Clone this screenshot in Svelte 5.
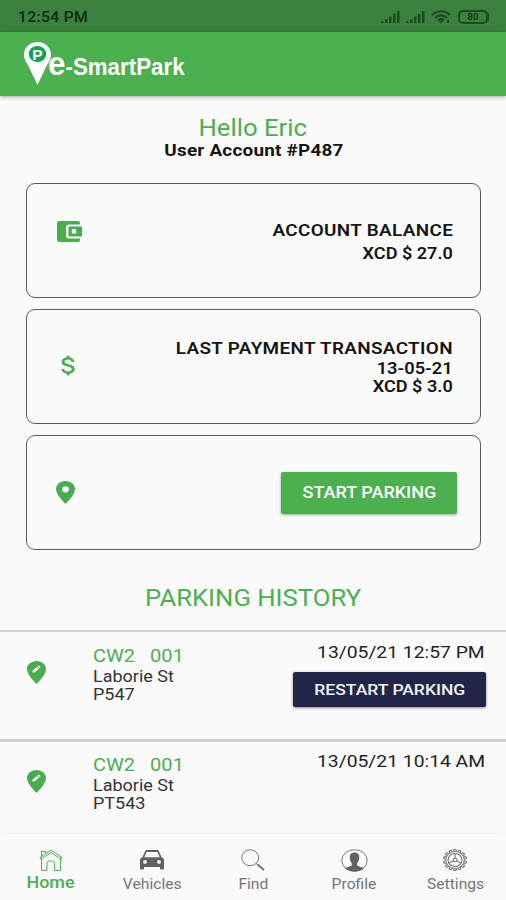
<script lang="ts">
  /**
   * e-SmartPark home screen: balance, last payment, start action,
   * and the most recent parking sessions above the tab bar.
   */
  interface Session {
    plate: string;
    street: string;
    spot: string;
    time: string;
    restart: boolean;
  }

  const sessions: Session[] = [
    { plate: "CW2", street: "Laborie St", spot: "P547", time: "13/05/21 12:57 PM", restart: true },
    { plate: "CW2", street: "Laborie St", spot: "PT543", time: "13/05/21 10:14 AM", restart: false },
  ];

  const tabs = ["Home", "Vehicles", "Find", "Profile", "Settings"];
  let active = $state("Home");

  const teeth = Array.from({ length: 14 }, (_, i) => (i * 360) / 14);
</script>

{#snippet signal()}
  <svg class="signal" viewBox="0 0 19 13" preserveAspectRatio="none">
    <path d="M0 11h2.500v2H0zM4 9h2.500v4H4zM8 6h2.500v7H8zM12 3h2.500v10H12zM16 0h2.500v13H16z" />
  </svg>
{/snippet}

<div class="screen">
  <div class="status">
    <span class="clock">12:54 PM</span>
    <div class="indicators">
      {@render signal()}
      {@render signal()}
      <svg class="wifi" viewBox="0 0 20 14">
        <path d="M1 5c5-5 13-5 18 0M4 8c3.500-3.500 8.500-3.500 12 0M7 10.500c2-2 4-2 6 0" />
        <path class="solid" d="M10 13.500l-2.500-3h5zM16 10h2v3h-2z" />
      </svg>
      <div class="battery"><span>80</span></div>
    </div>
  </div>

  <header class="appbar">
    <svg class="logo-pin" viewBox="0 0 27 43">
      <path d="M13.500 0C6 0 0 5.500 0 12.500c0 5 2.500 8 5 12.500l8.500 18L22 25c2.500-4.500 5-7.500 5-12.500C27 5.500 21 0 13.500 0z" fill="#fff" />
      <ellipse cx="13.500" cy="12" rx="8.700" ry="8" fill="#12a150" />
      <text x="13.500" y="17.500" text-anchor="middle">P</text>
    </svg>
    <span class="logo-text"><span class="logo-e">e</span>-SmartPark</span>
  </header>

  <main>
    <div class="greeting">
      <h1><span>Hello Eric</span></h1>
      <p><span>User Account #P487</span></p>
    </div>

    <section class="cards">
      <div class="card">
        <svg class="wallet" viewBox="0 0 25 21" preserveAspectRatio="none">
          <path d="M2.500 0H21a2 2 0 0 1 2 2v1.500H12A3 3 0 0 0 9 6.500v8a3 3 0 0 0 3 3h11V19a2 2 0 0 1-2 2H2.500A2.500 2.500 0 0 1 0 18.500v-16A2.500 2.500 0 0 1 2.500 0z" />
          <path fill-rule="evenodd" d="M12.500 5.500H25v10H12.500a1 1 0 0 1-1-1v-8a1 1 0 0 1 1-1zM14.800 8.300v4.200h4.400V8.300z" />
        </svg>
        <div class="details balance">
          <strong>ACCOUNT BALANCE</strong>
          <b>XCD $ 27.0</b>
        </div>
      </div>

      <div class="card">
        <svg class="dollar" viewBox="6.100 3 10.600 18" preserveAspectRatio="none">
          <path d="M11.800 10.900c-2.270-.590-3-1.200-3-2.150 0-1.090 1.010-1.850 2.700-1.850 1.780 0 2.440.850 2.500 2.100h2.210c-.070-1.720-1.120-3.300-3.210-3.810L11.500 3 10 5.160c-1.940.420-3.500 1.680-3.500 3.610 0 2.310 1.910 3.460 4.700 4.130 2.500.600 3 1.480 3 2.410 0 .690-.490 1.790-2.700 1.790-2.060 0-2.870-.920-2.980-2.100h-2.200c.120 2.190 1.760 3.420 3.680 3.830L11.500 21l1.500-2.150c1.950-.370 3.500-1.500 3.500-3.550 0-2.840-2.430-3.810-4.700-4.400z" />
        </svg>
        <div class="details payment">
          <strong>LAST PAYMENT TRANSACTION</strong>
          <b class="date">13-05-21</b>
          <b>XCD $ 3.0</b>
        </div>
      </div>

      <div class="card">
        <svg class="pin" viewBox="5 2 14 20" preserveAspectRatio="none">
          <path fill-rule="evenodd" d="M12 2C8.130 2 5 5.130 5 9c0 5.250 7 13 7 13s7-7.750 7-13c0-3.870-3.130-7-7-7zM12 6.500a2.500 2.700 0 1 0 0 5.400a2.500 2.700 0 1 0 0-5.400z" />
        </svg>
        <button class="start" type="button"><span>START PARKING</span></button>
      </div>
    </section>

    <h2><span>PARKING HISTORY</span></h2>

    {#each sessions as s (s.time)}
      <article class="session">
        <svg class="pin" viewBox="5 2 14 20" preserveAspectRatio="none">
          <path d="M12 2C8.140 2 5 5.140 5 9c0 5.250 7 13 7 13s7-7.750 7-13c0-3.860-3.140-7-7-7zm-1.560 10H9v-1.440l3.350-3.340 1.430 1.430L10.440 12zm4.450-4.450l-.700.700-1.440-1.440.700-.700c.150-.150.390-.150.540 0l.900.900c.150.150.150.390 0 .540z" />
        </svg>
        <div class="place">
          <span class="plate">{s.plate}&nbsp;&nbsp; 001</span>
          <span>{s.street}</span>
          <span>{s.spot}</span>
        </div>
        <div class="when">
          <time>{s.time}</time>
          {#if s.restart}
            <button class="restart" type="button"><span>RESTART PARKING</span></button>
          {/if}
        </div>
      </article>
    {/each}
  </main>

  <nav>
    {#each tabs as tab (tab)}
      <button class="tab" class:active={tab === active} type="button" onclick={() => (active = tab)}>
        {#if tab === "Home"}
          <svg width="24" height="22" viewBox="0 0 24 22" class="line">
            <path d="M2.500 9v12.500h5.500V14c0-1.500 1-2 3.700-2s3.700.500 3.700 2v7.500H21.500V9" />
            <path d="M1 8.500L12 1l11 7.500-1 1.500L12 3.500 2 10zM2.500 7V2.500h4v2" />
          </svg>
        {:else if tab === "Vehicles"}
          <svg width="24" height="20" viewBox="0 0 24 20">
            <path fill-rule="evenodd" d="M5 1.500C5.400.500 6 0 7 0h10c1 0 1.600.500 2 1.500L21.500 7 24 9v9.500a1 1 0 0 1-1 1h-2a1 1 0 0 1-1-1V17H4v1.500a1 1 0 0 1-1 1H1a1 1 0 0 1-1-1V9l2.500-2zM6.500 2L4.300 7.300h15.400L17.500 2zM5 10a1.900 1.900 0 1 0 0 3.800A1.900 1.900 0 0 0 5 10zm14 0a1.900 1.900 0 1 0 0 3.800 1.900 1.900 0 0 0 0-3.800z" />
          </svg>
        {:else if tab === "Find"}
          <svg width="24" height="22" viewBox="0 0 24 22" class="line">
            <ellipse cx="9.200" cy="8.700" rx="8.500" ry="8" />
            <path d="M15 14.500l2 1.500" />
            <path class="thick" d="M16.500 15.500l6.500 5.500" />
          </svg>
        {:else if tab === "Profile"}
          <svg width="27" height="23" viewBox="0 0 27 23">
            <ellipse class="ring" cx="13.500" cy="11.500" rx="12.700" ry="10.800" />
            <path d="M13.500 3.500c3.500 0 5 2 4.700 5-.1 3-1 4.500-2 5.700v2.300c2 1.300 4.600 1.500 6.800 3-5 4-14 4-19 0 2.200-1.500 4.800-1.700 6.800-3v-2.300c-1-1.200-1.900-2.700-2-5.700-.3-3 1.200-5 4.700-5z" />
          </svg>
        {:else}
          <svg width="24" height="22" viewBox="-12 -11 24 22" class="line">
            <g transform="scale(1.090 1)">
              {#each teeth as angle}
                <path d="M-1.300-8.600l.400-1.900h1.800l.400 1.900" transform="rotate({angle})" />
              {/each}
              <circle r="8.500" />
              <circle r="6.400" />
              <circle r="1.700" />
              <path d="M0-1.700v-4.700M1.500.900l4 2.400M-1.500.900l-4 2.400" />
            </g>
          </svg>
        {/if}
        <span>{tab}</span>
      </button>
    {/each}
  </nav>
</div>

<style>
  :global(body) {
    margin: 0;
  }
  .screen {
    --green: #4caf50;
    display: flex;
    flex-direction: column;
    width: 506px;
    height: 900px;
    overflow: hidden;
    background: #fafafa;
    color: #151515;
    font-family: Roboto, sans-serif;
  }
  button {
    border: 0;
    padding: 0;
    font-family: inherit;
    cursor: pointer;
  }
  svg {
    display: block;
    flex: none;
  }

  .status {
    display: flex;
    align-items: center;
    justify-content: space-between;
    box-sizing: border-box;
    height: 32px;
    padding: 1px 15px 0 18px;
    background: #3a813e;
    color: #0c2a10;
  }
  .clock {
    font-size: 14px;
    font-weight: 500;
    letter-spacing: 0.3px;
    transform: scaleX(1.12);
    transform-origin: left;
  }
  .indicators {
    display: flex;
    align-items: center;
    gap: 6px;
  }
  .signal {
    width: 19px;
    height: 12px;
    fill: #1c4a20;
  }
  .wifi {
    width: 20px;
    height: 14px;
    fill: none;
    stroke: #1c4a20;
    stroke-width: 2.2;
  }
  .wifi .solid {
    fill: #1c4a20;
    stroke: none;
  }
  .battery {
    display: flex;
    align-items: center;
    justify-content: center;
    box-sizing: border-box;
    width: 30px;
    height: 14px;
    margin-left: 1px;
    margin-right: 3px;
    border: 2px solid #1c4a20;
    border-radius: 5px;
    font-size: 9.5px;
    font-weight: 500;
    box-shadow: 3px 0 0 -2px #1c4a20;
  }

  .appbar {
    display: flex;
    flex: none;
    height: 64px;
    padding-left: 24px;
    background: var(--green);
    box-shadow: 0 1px 4px rgba(0, 0, 0, 0.35);
    z-index: 1;
  }
  .logo-pin {
    width: 27px;
    height: 43px;
    margin-top: 10px;
  }
  .logo-pin text {
    fill: #fff;
    font: bold 15.5px "Liberation Sans", sans-serif;
  }
  .logo-text {
    margin: 14px 0 0 -3px;
    color: #fff;
    font: bold 23.5px/36px "Liberation Sans", sans-serif;
    white-space: nowrap;
    transform: scaleX(0.95);
    transform-origin: left;
  }
  .logo-e {
    font-size: 33px;
  }

  main {
    flex: 1;
    min-height: 0;
  }
  .greeting {
    padding-top: 19px;
    text-align: center;
  }
  h1,
  h2,
  p {
    margin: 0;
    font-weight: 400;
  }
  h1 span,
  h2 span,
  p span {
    display: inline-block;
  }
  h1 {
    font-size: 24px;
    line-height: 27px;
    color: var(--green);
  }
  h1 span {
    transform: scaleX(1.07);
  }
  p {
    padding-left: 1px;
    font-size: 16px;
    line-height: 18px;
    font-weight: 700;
  }
  p span {
    letter-spacing: 0.2px;
    transform: scaleX(1.18);
  }

  .cards {
    display: flex;
    flex-direction: column;
    gap: 11px;
    padding: 23px 25px 0 26px;
  }
  .card {
    display: flex;
    align-items: center;
    justify-content: space-between;
    box-sizing: border-box;
    height: 115px;
    border: 1.5px solid #5c5c5c;
    border-radius: 9px;
    padding: 0 27px 0 29px;
  }
  .card svg,
  .session svg {
    fill: #48ad4c;
  }
  .wallet {
    width: 25px;
    height: 21px;
    margin: 0 0 18px 1px;
  }
  .dollar {
    width: 14px;
    height: 21px;
    margin: 0 0 3px 5px;
  }
  .pin {
    width: 19px;
    height: 23px;
  }
  .details {
    display: flex;
    flex-direction: column;
    align-items: flex-end;
    padding-top: 2px;
    font-size: 16px;
  }
  .details strong,
  .details b {
    font-weight: 600;
    transform: scaleX(1.13);
    transform-origin: right;
  }
  .details strong {
    letter-spacing: 0.3px;
    transform: scaleX(1.18);
  }
  .details .date {
    transform: scaleX(1.14);
  }
  .balance {
    line-height: 23px;
  }
  .payment {
    line-height: 18px;
  }
  .payment strong {
    padding-bottom: 1px;
    line-height: 20px;
  }
  .start {
    width: 176px;
    height: 42px;
    margin-right: -4px;
    border-radius: 2px;
    background: var(--green);
    color: #fff;
    box-shadow: 0 1px 3px rgba(0, 0, 0, 0.35);
  }
  .start span,
  .restart span {
    display: inline-block;
    font-size: 16px;
    font-weight: 500;
    white-space: nowrap;
    transform: scaleX(1.125);
  }
  .restart span {
    font-size: 15.5px;
    transform: scaleX(1.13);
  }

  h2 {
    padding: 33px 0 17px;
    font-size: 24px;
    line-height: 30px;
    text-align: center;
    color: var(--green);
  }
  h2 span {
    transform: scaleX(1.07);
  }

  .session {
    display: flex;
    box-sizing: border-box;
    height: 109px;
    border-top: 2px solid #d0d0d0;
    padding: 0 20px 0 27px;
  }
  .session + .session {
    border-top-width: 3px;
  }
  .session + .session > * {
    margin-top: -1px;
  }
  .session .pin {
    margin-top: 29px;
  }
  .session + .session .pin {
    margin-top: 28px;
  }
  .place {
    display: flex;
    flex-direction: column;
    flex: 1;
    margin-left: 47px;
    padding-top: 13px;
    font-size: 16px;
    line-height: 18px;
    color: #333;
  }
  .place span {
    transform: scaleX(1.125);
    transform-origin: left;
  }
  .place .plate {
    padding-bottom: 1px;
    font-size: 18.5px;
    line-height: 22px;
    color: var(--green);
    transform: scaleX(1.085);
  }
  .when {
    display: flex;
    flex-direction: column;
    align-items: flex-end;
    padding-top: 10px;
  }
  time {
    margin-right: 1px;
    font-size: 17px;
    line-height: 20px;
    color: #222;
    transform: scaleX(1.135);
    transform-origin: right;
  }
  .restart {
    width: 193px;
    height: 35px;
    margin-top: 10px;
    border-radius: 2px;
    background: #212648;
    color: #f2f3f8;
    box-shadow: 0 1px 3px rgba(0, 0, 0, 0.45);
  }

  nav {
    display: grid;
    grid-template-columns: repeat(5, 1fr);
    height: 66px;
    flex: none;
    background: #fafafa;
    box-shadow: 0 -1px 3px rgba(0, 0, 0, 0.05);
    z-index: 1;
  }
  .tab {
    display: grid;
    grid-template-rows: 22px 24px;
    justify-items: center;
    align-items: center;
    align-content: start;
    padding-top: 15px;
    background: none;
    color: #757575;
    font-size: 14px;
  }
  .tab svg {
    fill: #616161;
  }
  .tab svg.line {
    fill: none;
    stroke: currentColor;
    stroke-width: 1;
  }
  .tab .thick {
    stroke-width: 2;
  }
  .tab .ring {
    fill: none;
    stroke: currentColor;
  }
  .tab span {
    padding-top: 1px;
    transform: scaleX(1.12);
  }
  .tab.active {
    color: var(--green);
    font-size: 16px;
  }
  .tab.active span {
    padding: 0 0 2px;
    font-weight: 500;
  }
</style>
